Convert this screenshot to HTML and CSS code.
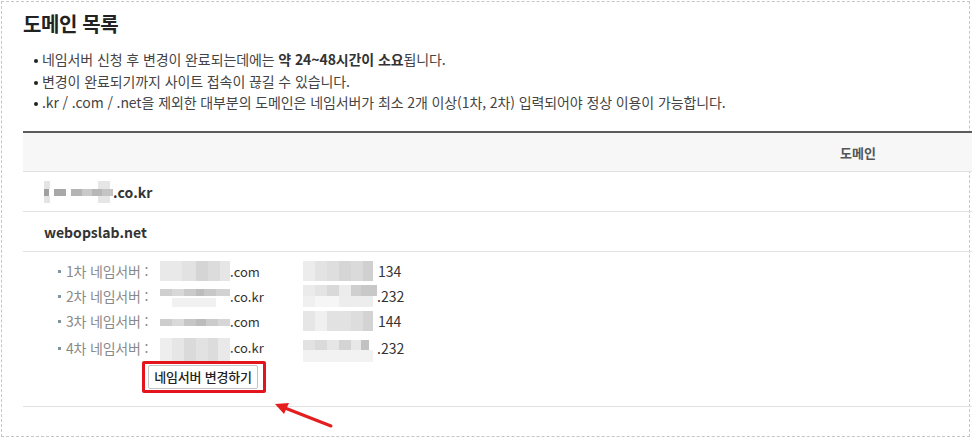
FILE: index.html
```html
<!DOCTYPE html>
<html lang="ko">
<head>
<meta charset="utf-8">
<title>도메인 목록</title>
<link rel="stylesheet" href="styles.css">
</head>
<body>
<div class="page">
  <h1 class="title">도메인 목록</h1>
  <ul class="notes">
    <li>네임서버 신청 후 변경이 완료되는데에는 <b>약 24~48시간이 소요</b>됩니다.</li>
    <li>변경이 완료되기까지 사이트 접속이 끊길 수 있습니다.</li>
    <li>.kr / .com / .net을 제외한 대부분의 도메인은 네임서버가 최소 2개 이상(1차, 2차) 입력되어야 정상 이용이 가능합니다.</li>
  </ul>
  <div class="table">
    <div class="thead"><span class="th">도메인</span></div>
    <div class="row"><span class="mz mz-dom"></span>.co.kr</div>
    <div class="row">webopslab.net</div>
    <div class="details">
      <div class="ns">
        <span class="lbl">1차 네임서버 :</span>
        <span class="val"><span class="mz mz-a"></span>.com</span>
        <span class="ip"><span class="mz mz-ipa"></span>134</span>
      </div>
      <div class="ns">
        <span class="lbl">2차 네임서버 :</span>
        <span class="val"><span class="mz mz-b"></span>.co.kr</span>
        <span class="ip"><span class="mz mz-ipb"></span>.232</span>
      </div>
      <div class="ns">
        <span class="lbl">3차 네임서버 :</span>
        <span class="val"><span class="mz mz-c"></span>.com</span>
        <span class="ip"><span class="mz mz-ipc"></span>144</span>
      </div>
      <div class="ns">
        <span class="lbl">4차 네임서버 :</span>
        <span class="val"><span class="mz mz-d"></span>.co.kr</span>
        <span class="ip"><span class="mz mz-ipd"></span>.232</span>
      </div>
      <div class="btn-wrap"><span class="highlight"><button class="btn" type="button">네임서버 변경하기</button></span></div>
    </div>
  </div>
  <svg class="arrow" width="70" height="36" viewBox="0 0 70 36">
    <line x1="62" y1="29" x2="16" y2="11" stroke="#e41e1e" stroke-width="3" stroke-linecap="round"/>
    <polygon points="6,7 20,6 15,17" fill="#e41e1e"/>
  </svg>
</div>
</body>
</html>
```

FILE: styles.css
```css
html, body {
  margin: 0;
  padding: 0;
  overflow: hidden;
  background: #fff;
}
body {
  font-family: "Noto Sans CJK KR", "Noto Sans", sans-serif;
  color: #333;
}
.page {
  position: relative;
  margin: 1px 0 0 1px;
  width: 969px;
  height: 436px;
  box-sizing: border-box;
  border: 1px dashed #c6c6c6;
  padding: 8px 0 0 21px;
}
.title {
  margin: 0;
  font-size: 20px;
  line-height: 28px;
  font-weight: 700;
  color: #222;
  letter-spacing: -0.4px;
}
.notes {
  margin: 11px 0 0 0;
  padding: 0 0 0 19px;
  list-style: none;
  font-size: 14px;
  line-height: 21.5px;
  color: #444;
  letter-spacing: -0.1px;
}
.notes li {
  position: relative;
}
.notes li::before {
  content: "";
  position: absolute;
  left: -8px;
  top: 10px;
  width: 4px;
  height: 4px;
  border-radius: 50%;
  background: #222;
}
.notes b {
  color: #333;
}
.table {
  margin-top: 17.5px;
  width: 949px;
  border-top: 2px solid #5c5c5c;
}
.thead {
  height: 38px;
  background: #f7f7f7;
  border-bottom: 1px solid #e2e2e2;
  display: flex;
  align-items: center;
  justify-content: flex-end;
  padding-right: 96px;
}
.th {
  font-size: 13px;
  font-weight: 700;
  color: #555;
}
.row {
  height: 39px;
  border-bottom: 1px solid #e2e2e2;
  display: flex;
  align-items: center;
  padding-left: 21px;
  font-size: 14px;
  font-weight: 700;
  color: #333;
}
.details {
  padding: 6.5px 0 13px 35px;
  border-bottom: 1px solid #e2e2e2;
}
.ns {
  display: grid;
  grid-template-columns: 102px 143px auto;
  height: 25px;
  align-items: center;
  font-size: 13px;
}
.lbl {
  position: relative;
  padding-left: 8px;
  font-size: 14px;
  color: #8a8a8a;
  letter-spacing: -0.2px;
}
.lbl::before {
  content: "";
  position: absolute;
  left: 0;
  top: 9px;
  width: 3px;
  height: 3px;
  background: #7f96a0;
}
.val, .ip {
  color: #333;
  display: flex;
  align-items: center;
}
.ip {
  font-size: 14px;
}
.mz {
  display: inline-block;
  flex: none;
  background-repeat: no-repeat;
}
.mz-dom {
  width: 69px;
  height: 22px;
  background-image:
    linear-gradient(90deg, #a0a0a0 0 5px, #fff 5px 10px, #a8a8a8 10px 22px, #fff 22px 27px, #b4b4b4 27px 38px, #c9c9c9 38px 48px, #b7b7b7 48px 58px, #c4c4c4 58px 69px),
    linear-gradient(90deg, #e4e4e4 0 6px, transparent 6px 54px, #e6e6e6 54px 66px, transparent 66px);
  background-size: 100% 7px, 100% 100%;
  background-position: 0 8px, 0 0;
}
.mz-a {
  width: 70px;
  height: 20px;
  background-image:
    linear-gradient(90deg, #e9e9e9 0 22px, #e2e2e2 22px 36px, #d5d5d5 36px 48px, #dcdcdc 48px 60px, #e6e6e6 60px 70px);
}
.mz-b {
  width: 70px;
  height: 22px;
  background-image:
    linear-gradient(90deg, #cfcfcf 0 12px, #d8d8d8 12px 24px, #cacaca 24px 36px, #bdbdbd 36px 44px, #c8c8c8 44px 56px, #d2d2d2 56px 70px),
    linear-gradient(90deg, transparent 0 12px, #f1f1f1 12px 56px, transparent 56px);
  background-size: 100% 7px, 100% 9px;
  background-position: 0 4px, 0 13px;
}
.mz-c {
  width: 70px;
  height: 12px;
  background-image:
    linear-gradient(90deg, #cdcdcd 0 12px, #d9d9d9 12px 24px, #c6c6c6 24px 36px, #bcbcbc 36px 46px, #cbcbcb 46px 58px, #d6d6d6 58px 70px);
  background-size: 100% 7px;
  background-position: 0 4px;
}
.mz-d {
  width: 70px;
  height: 24px;
  margin-top: 4px;
  background-image:
    linear-gradient(90deg, #eeeeee 0 12px, #e6e6e6 12px 24px, #dadada 24px 36px, #e2e2e2 36px 48px, #dcdcdc 48px 58px, #e9e9e9 58px 70px);
}
.mz-ipa {
  width: 70px;
  height: 20px;
  margin-right: 5px;
  background-image:
    linear-gradient(90deg, #ececec 0 12px, #e3e3e3 12px 24px, #dedede 24px 36px, #d6d6d6 36px 48px, #dadada 48px 60px, #d0d0d0 60px 70px);
}
.mz-ipb {
  width: 74px;
  height: 22px;
  background-image:
    linear-gradient(90deg, #ebebeb 0 12px, #e4e4e4 12px 24px, #d9d9d9 24px 36px, #ececec 36px 48px, #cfcfcf 48px 58px, #c8c8c8 58px 74px),
    linear-gradient(90deg, #f0f0f0 0 12px, #f6f6f6 12px 36px, #ededed 36px 70px, transparent 70px);
  background-size: 100% 11px, 100% 11px;
  background-position: 0 0, 0 11px;
}
.mz-ipc {
  width: 70px;
  height: 20px;
  margin-right: 5px;
  background-image:
    linear-gradient(90deg, #e6e6e6 0 12px, #f0f0f0 12px 24px, #e2e2e2 24px 48px, #dddddd 48px 60px, #d3d3d3 60px 70px);
}
.mz-ipd {
  width: 74px;
  height: 22px;
  margin-top: 6px;
  background-image:
    linear-gradient(90deg, #e2e2e2 0 12px, #dadada 12px 24px, #e6e6e6 24px 36px, #d4d4d4 36px 48px, #e8e8e8 48px 58px, #c2c2c2 58px 66px, #fff 66px 74px),
    linear-gradient(90deg, #f2f2f2 0 70px, transparent 70px);
  background-size: 100% 10px, 100% 12px;
  background-position: 0 0, 0 10px;
}
.btn-wrap {
  margin: 2.5px 0 0 84px;
  height: 32px;
  display: flex;
}
.highlight {
  display: inline-flex;
  align-items: center;
  box-sizing: border-box;
  height: 32px;
  padding: 0 5px 0 3px;
  border: 3px solid #e3141b;
  border-radius: 2px;
}
.btn {
  height: 24px;
  width: 110px;
  padding: 0;
  background: #fff;
  border: 1px solid #c4c4c4;
  border-radius: 2px;
  font-family: "Noto Sans CJK KR", "Noto Sans", sans-serif;
  font-size: 13px;
  font-weight: 500;
  color: #222;
  line-height: 22px;
  letter-spacing: -0.2px;
}
.arrow {
  position: absolute;
  left: 267px;
  top: 395px;
}
```
